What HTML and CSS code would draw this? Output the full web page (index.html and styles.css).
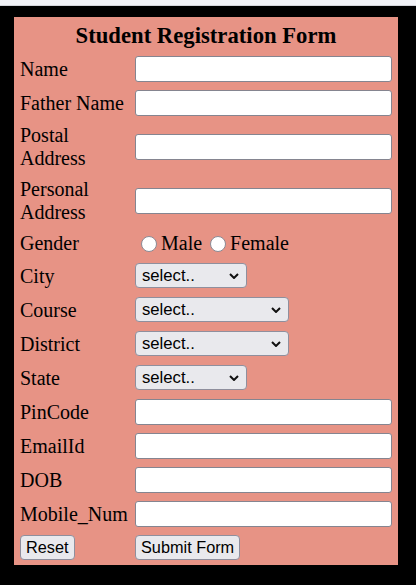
FILE: index.html
```html
<!DOCTYPE html>
<html lang="en">
<head>
    <meta charset="UTF-8">
    <meta name="viewport" content="width=device-width, initial-scale=1.0">
    <title>Student Registration Form</title>
    <link rel="stylesheet" href="styles.css">
</head>
<body>

    <div class="topbar"></div>

    <div class="page">
        <form class="form-box">
            <h2 class="form-title">Student Registration Form</h2>

            <label class="field-label" for="name">Name</label>
            <input type="text" id="name" class="field-input">

            <label class="field-label" for="father">Father Name</label>
            <input type="text" id="father" class="field-input">

            <label class="field-label" for="postal">Postal Address</label>
            <input type="text" id="postal" class="field-input">

            <label class="field-label" for="personal">Personal Address</label>
            <input type="text" id="personal" class="field-input">

            <span class="field-label">Gender</span>
            <div class="radio-group">
                <input type="radio" name="gender" id="male" class="radio"><label for="male">Male</label>
                <input type="radio" name="gender" id="female" class="radio"><label for="female">Female</label>
            </div>

            <label class="field-label" for="city">City</label>
            <span class="select-wrap select-short">
                <select id="city" class="field-select">
                    <option>select..</option>
                </select>
                <svg class="chevron" width="10" height="6" viewBox="0 0 10 6"><path d="M1 1 L5 5 L9 1" /></svg>
            </span>

            <label class="field-label" for="course">Course</label>
            <span class="select-wrap select-long">
                <select id="course" class="field-select">
                    <option>select..</option>
                </select>
                <svg class="chevron" width="10" height="6" viewBox="0 0 10 6"><path d="M1 1 L5 5 L9 1" /></svg>
            </span>

            <label class="field-label" for="district">District</label>
            <span class="select-wrap select-long">
                <select id="district" class="field-select">
                    <option>select..</option>
                </select>
                <svg class="chevron" width="10" height="6" viewBox="0 0 10 6"><path d="M1 1 L5 5 L9 1" /></svg>
            </span>

            <label class="field-label" for="state">State</label>
            <span class="select-wrap select-short">
                <select id="state" class="field-select">
                    <option>select..</option>
                </select>
                <svg class="chevron" width="10" height="6" viewBox="0 0 10 6"><path d="M1 1 L5 5 L9 1" /></svg>
            </span>

            <label class="field-label" for="pin">PinCode</label>
            <input type="text" id="pin" class="field-input">

            <label class="field-label" for="email">EmailId</label>
            <input type="text" id="email" class="field-input">

            <label class="field-label" for="dob">DOB</label>
            <input type="text" id="dob" class="field-input">

            <label class="field-label" for="mobile">Mobile_Num</label>
            <input type="text" id="mobile" class="field-input">

            <button type="reset" class="btn">Reset</button>
            <button type="submit" class="btn">Submit Form</button>
        </form>
    </div>

</body>
</html>
```

FILE: styles.css
```css
body {
    margin: 0;
    background-color: #000;
    font-family: "Liberation Serif", "Times New Roman", serif;
    color: #000;
}
.topbar {
    height: 5px;
    background-color: #f2f3f7;
    border-bottom: 1px solid #d4d5da;
}
.page {
    padding: 11px 18px 20px 14px;
}
.form-box {
    width: 384px;
    box-sizing: border-box;
    padding: 6px 6px 5px;
    background-color: #e79385;
    display: grid;
    grid-template-columns: 111px 257px;
    column-gap: 4px;
    row-gap: 8px;
    align-items: center;
}
.form-title {
    grid-column: 1 / 3;
    margin: 0;
    text-align: center;
    font-size: 22.7px;
    line-height: 25px;
    font-weight: bold;
}
.field-label {
    font-size: 20px;
    line-height: 23px;
}
.field-input {
    width: 257px;
    height: 26px;
    box-sizing: border-box;
    margin: 0;
    background-color: #fff;
    border: 1px solid #858590;
    border-radius: 3px;
}
.radio-group {
    display: flex;
    align-items: center;
    font-size: 20px;
    line-height: 23px;
}
.radio {
    appearance: none;
    width: 16px;
    height: 16px;
    margin: 1px 4px 0 6px;
    border: 1.5px solid #8b8b95;
    border-radius: 50%;
    background-color: #fff;
    box-sizing: border-box;
}
.radio-group label {
    margin-right: 2px;
}
.select-wrap {
    position: relative;
    display: block;
    height: 26px;
}
.select-short {
    width: 112px;
}
.select-long {
    width: 154px;
}
.field-select {
    appearance: none;
    width: 100%;
    height: 25px;
    margin: 0;
    padding: 0 0 0 6px;
    font-family: "Liberation Sans", Arial, sans-serif;
    font-size: 16.7px;
    color: #000;
    background-color: #e9e9ed;
    border: 1px solid #8f8f9d;
    border-radius: 4px;
}
.chevron {
    position: absolute;
    right: 8px;
    top: 10px;
    pointer-events: none;
}
.chevron path {
    fill: none;
    stroke: #111;
    stroke-width: 2;
}
.btn {
    justify-self: start;
    height: 25px;
    margin: 0;
    padding: 0 5px;
    font-family: "Liberation Sans", Arial, sans-serif;
    font-size: 16.3px;
    color: #000;
    background-color: #e9e9ed;
    border: 1px solid #8f8f9d;
    border-radius: 4px;
}
```
